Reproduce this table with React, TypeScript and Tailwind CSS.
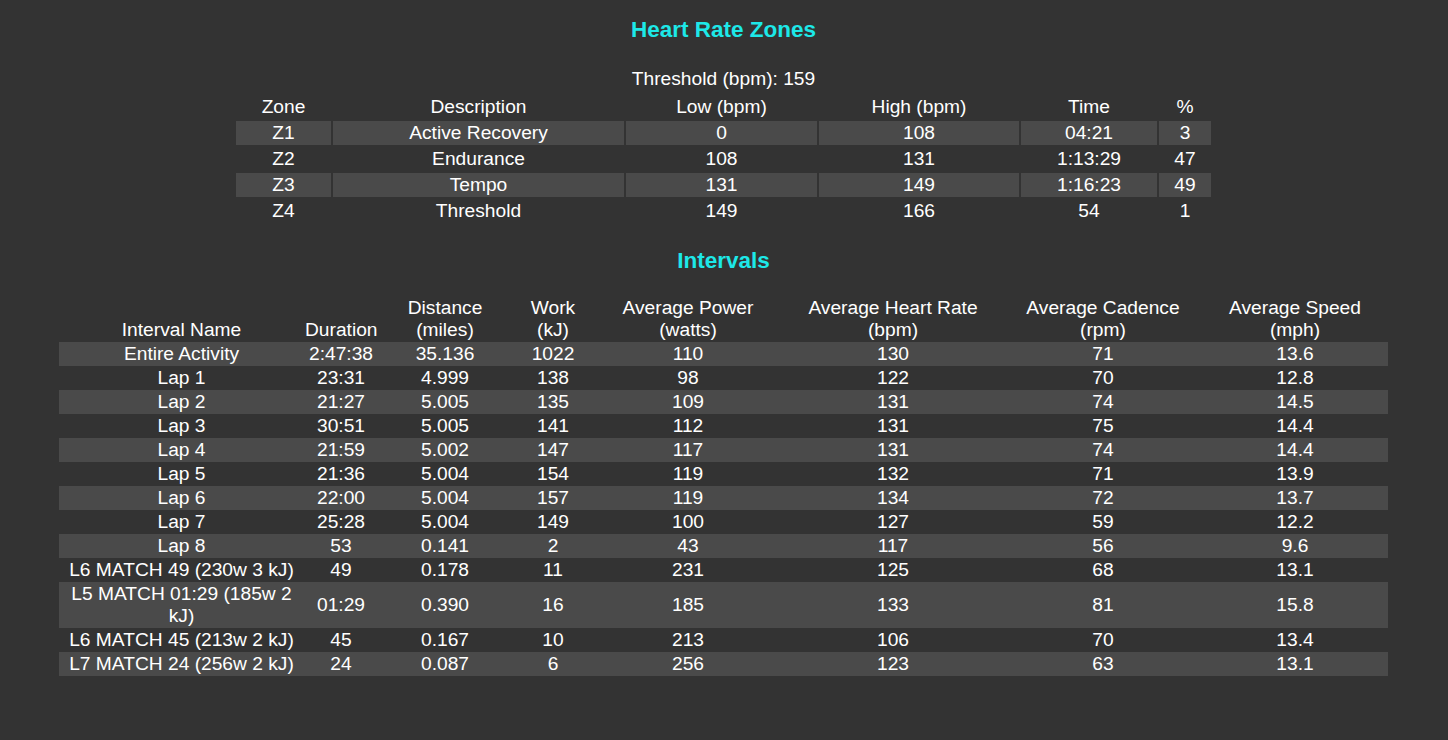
const zones = [
  { zone: "Z1", desc: "Active Recovery", low: "0", high: "108", time: "04:21", pct: "3" },
  { zone: "Z2", desc: "Endurance", low: "108", high: "131", time: "1:13:29", pct: "47" },
  { zone: "Z3", desc: "Tempo", low: "131", high: "149", time: "1:16:23", pct: "49" },
  { zone: "Z4", desc: "Threshold", low: "149", high: "166", time: "54", pct: "1" },
];

const intervals = [
  ["Entire Activity", "2:47:38", "35.136", "1022", "110", "130", "71", "13.6"],
  ["Lap 1", "23:31", "4.999", "138", "98", "122", "70", "12.8"],
  ["Lap 2", "21:27", "5.005", "135", "109", "131", "74", "14.5"],
  ["Lap 3", "30:51", "5.005", "141", "112", "131", "75", "14.4"],
  ["Lap 4", "21:59", "5.002", "147", "117", "131", "74", "14.4"],
  ["Lap 5", "21:36", "5.004", "154", "119", "132", "71", "13.9"],
  ["Lap 6", "22:00", "5.004", "157", "119", "134", "72", "13.7"],
  ["Lap 7", "25:28", "5.004", "149", "100", "127", "59", "12.2"],
  ["Lap 8", "53", "0.141", "2", "43", "117", "56", "9.6"],
  ["L6 MATCH 49 (230w 3 kJ)", "49", "0.178", "11", "231", "125", "68", "13.1"],
  ["L5 MATCH 01:29 (185w 2 kJ)", "01:29", "0.390", "16", "185", "133", "81", "15.8"],
  ["L6 MATCH 45 (213w 2 kJ)", "45", "0.167", "10", "213", "106", "70", "13.4"],
  ["L7 MATCH 24 (256w 2 kJ)", "24", "0.087", "6", "256", "123", "63", "13.1"],
];

const intervalHeads = [
  { label: ["Interval Name"], w: "w-[245px]" },
  { label: ["Duration"], w: "w-[74px]" },
  { label: ["Distance", "(miles)"], w: "w-[134px]" },
  { label: ["Work", "(kJ)"], w: "w-[82px]" },
  { label: ["Average Power", "(watts)"], w: "w-[188px]" },
  { label: ["Average Heart Rate", "(bpm)"], w: "w-[222px]" },
  { label: ["Average Cadence", "(rpm)"], w: "w-[198px]" },
  { label: ["Average Speed", "(mph)"], w: "w-[186px]" },
];

const cell = "p-[1px] text-center font-normal";

export default function App() {
  return (
    <div className="min-h-screen bg-[#333333] text-white font-['Liberation_Sans',Arial,sans-serif] text-[19.2px] leading-[22px]">
      <div className="flex flex-col items-center pt-[17px] pb-10 pr-[1px]">
        <h3 className="text-[22.5px] leading-[26px] font-bold text-[#1de8e8]">Heart Rate Zones</h3>

        <div className="mt-[25px] mb-[3px]">Threshold (bpm): 159</div>
        <table className="table-fixed border-separate border-spacing-[2px]">
          <thead>
            <tr>
              <th className={`${cell} w-[95px]`}>Zone</th>
              <th className={`${cell} w-[291px]`}>Description</th>
              <th className={`${cell} w-[191px]`}>Low (bpm)</th>
              <th className={`${cell} w-[200px]`}>High (bpm)</th>
              <th className={`${cell} w-[136px]`}>Time</th>
              <th className={`${cell} w-[52px]`}>%</th>
            </tr>
          </thead>
          <tbody>
            {zones.map((z, i) => {
              const bg = i % 2 === 0 ? "bg-[#4a4a4a]" : "";
              return (
                <tr key={z.zone}>
                  <td className={`${cell} ${bg}`}>{z.zone}</td>
                  <td className={`${cell} ${bg}`}>{z.desc}</td>
                  <td className={`${cell} ${bg}`}>{z.low}</td>
                  <td className={`${cell} ${bg}`}>{z.high}</td>
                  <td className={`${cell} ${bg}`}>{z.time}</td>
                  <td className={`${cell} ${bg}`}>{z.pct}</td>
                </tr>
              );
            })}
          </tbody>
        </table>

        <h3 className="mt-[23px] text-[22.5px] leading-[26px] font-bold text-[#1de8e8]">Intervals</h3>

        <table className="mt-[22px] w-[1329px] table-fixed border-collapse">
          <thead>
            <tr>
              {intervalHeads.map((h) => (
                <th key={h.label[0]} className={`${cell} ${h.w} align-bottom`}>
                  {h.label.map((l) => (
                    <div key={l}>{l}</div>
                  ))}
                </th>
              ))}
            </tr>
          </thead>
          <tbody>
            {intervals.map((row, i) => (
              <tr key={row[0]} className={i % 2 === 0 ? "bg-[#4a4a4a]" : ""}>
                {row.map((v, j) => (
                  <td key={j} className={cell}>
                    {v}
                  </td>
                ))}
              </tr>
            ))}
          </tbody>
        </table>
      </div>
    </div>
  );
}
